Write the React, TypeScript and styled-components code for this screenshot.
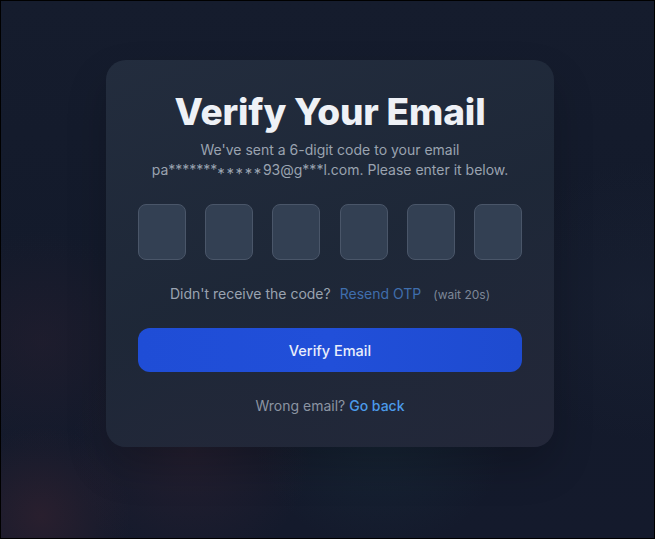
import React from "react";
import styled, { createGlobalStyle } from "styled-components";

const Global = createGlobalStyle`
  html, body { margin: 0; padding: 0; }
  body { font-family: Inter, "Noto Sans", sans-serif; -webkit-font-smoothing: antialiased; }
  * { box-sizing: border-box; }
`;

const Page = styled.div`
  width: 655px;
  height: 539px;
  border: 1px solid #000;
  display: flex;
  justify-content: center;
  align-items: flex-start;
  padding: 59px 0 0 5px;
  background:
    radial-gradient(circle at 40px 515px, rgba(80, 40, 50, 0.35), transparent 90px),
    radial-gradient(circle at 190px 450px, rgba(70, 40, 55, 0.3), transparent 120px),
    radial-gradient(circle at 40px 340px, rgba(60, 35, 50, 0.25), transparent 110px),
    radial-gradient(circle at 380px 420px, rgba(30, 70, 80, 0.25), transparent 130px),
    radial-gradient(circle at 640px 300px, rgba(40, 50, 70, 0.2), transparent 140px),
    linear-gradient(180deg, #151c2d 0%, #131a2b 50%, #141a2c 100%);
  overflow: hidden;
`;

const Card = styled.div`
  width: 448px;
  padding: 32px 32px 31px;
  border-radius: 20px;
  background: linear-gradient(160deg, rgba(36, 46, 63, 0.92) 0%, rgba(31, 41, 57, 0.9) 50%, rgba(36, 40, 58, 0.92) 100%);
  box-shadow: 0 20px 40px rgba(0, 0, 0, 0.2);
  display: flex;
  flex-direction: column;
  align-items: stretch;
  text-align: center;
`;

const Title = styled.h1`
  margin: 0;
  font-size: 37px;
  line-height: 40px;
  font-weight: 800;
  color: #eef1f6;
  letter-spacing: -0.15px;
`;

const Subtitle = styled.p`
  margin: 8px 0 0;
  font-size: 14px;
  line-height: 20px;
  color: #9aa3b0;
`;

const MidStars = styled.span`
  position: relative;
  top: 0.28em;
  font-size: 15px;
  letter-spacing: 1.6px;
  line-height: 0;
`;

const OtpRow = styled.div`
  margin-top: 24px;
  display: flex;
  justify-content: space-between;
`;

const OtpBox = styled.input`
  width: 48px;
  height: 56px;
  border-radius: 8px;
  border: 1px solid #4a5669;
  background: #334053;
  color: #fff;
  font-family: inherit;
  font-size: 22px;
  text-align: center;
  outline: none;
  padding: 0;
`;

const ResendRow = styled.div`
  margin-top: 24px;
  font-size: 14px;
  line-height: 20px;
  color: #9aa3b0;
  display: flex;
  justify-content: center;
  align-items: baseline;
`;

const ResendLink = styled.span`
  margin-left: 9px;
  color: #3f6ead;
`;

const Wait = styled.span`
  margin-left: 12px;
  font-size: 12px;
  color: #7d8797;
`;

const VerifyButton = styled.button`
  margin-top: 23px;
  height: 44px;
  border: none;
  border-radius: 12px;
  background: linear-gradient(90deg, #1f4dd6 0%, #214fd9 50%, #1e4bd0 100%);
  color: #e9eefb;
  font-family: inherit;
  font-size: 14.5px;
  font-weight: 500;
  cursor: pointer;
`;

const Footer = styled.p`
  margin: 24px 0 0;
  font-size: 14px;
  line-height: 20px;
  color: #8b94a2;
`;

const BackLink = styled.a`
  color: #4b9be9;
  text-decoration: none;
  font-weight: 500;
`;

export default function App() {
  return (
    <>
      <Global />
      <Page>
        <Card>
          <Title>Verify Your Email</Title>
          <Subtitle>
            We've sent a 6-digit code to your email
            <br />
            pa*******<MidStars>*****</MidStars>93@g***l.com. Please enter it below.
          </Subtitle>
          <OtpRow>
            {Array.from({ length: 6 }).map((_, i) => (
              <OtpBox key={i} maxLength={1} aria-label={`Digit ${i + 1}`} />
            ))}
          </OtpRow>
          <ResendRow>
            Didn't receive the code?
            <ResendLink>Resend OTP</ResendLink>
            <Wait>(wait 20s)</Wait>
          </ResendRow>
          <VerifyButton>Verify Email</VerifyButton>
          <Footer>
            Wrong email? <BackLink href="#">Go back</BackLink>
          </Footer>
        </Card>
      </Page>
    </>
  );
}
